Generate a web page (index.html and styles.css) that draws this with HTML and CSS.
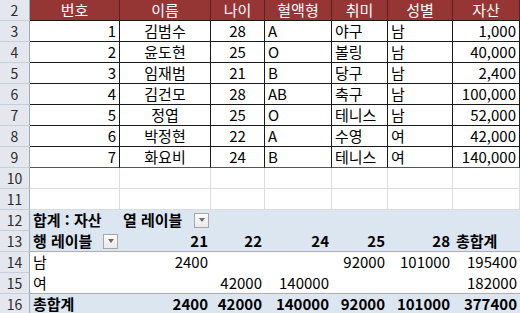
FILE: index.html
```html
<!DOCTYPE html>
<html lang="ko">
<head>
<meta charset="utf-8">
<link rel="stylesheet" href="styles.css">
</head>
<body>
<div class="sheet">
  <div class="row head">
    <div class="rh">2</div>
    <div class="c">번호</div><div class="c">이름</div><div class="c">나이</div><div class="c">혈액형</div><div class="c">취미</div><div class="c">성별</div><div class="c">자산</div>
  </div>
  <div class="row data">
    <div class="rh">3</div>
    <div class="c r">1</div><div class="c m">김범수</div><div class="c m">28</div><div class="c">A</div><div class="c">야구</div><div class="c">남</div><div class="c r">1,000</div>
  </div>
  <div class="row data">
    <div class="rh">4</div>
    <div class="c r">2</div><div class="c m">윤도현</div><div class="c m">25</div><div class="c">O</div><div class="c">볼링</div><div class="c">남</div><div class="c r">40,000</div>
  </div>
  <div class="row data">
    <div class="rh">5</div>
    <div class="c r">3</div><div class="c m">임재범</div><div class="c m">21</div><div class="c">B</div><div class="c">당구</div><div class="c">남</div><div class="c r">2,400</div>
  </div>
  <div class="row data">
    <div class="rh">6</div>
    <div class="c r">4</div><div class="c m">김건모</div><div class="c m">28</div><div class="c">AB</div><div class="c">축구</div><div class="c">남</div><div class="c r">100,000</div>
  </div>
  <div class="row data">
    <div class="rh">7</div>
    <div class="c r">5</div><div class="c m">정엽</div><div class="c m">25</div><div class="c">O</div><div class="c">테니스</div><div class="c">남</div><div class="c r">52,000</div>
  </div>
  <div class="row data">
    <div class="rh">8</div>
    <div class="c r">6</div><div class="c m">박정현</div><div class="c m">22</div><div class="c">A</div><div class="c">수영</div><div class="c">여</div><div class="c r">42,000</div>
  </div>
  <div class="row data last">
    <div class="rh">9</div>
    <div class="c r">7</div><div class="c m">화요비</div><div class="c m">24</div><div class="c">B</div><div class="c">테니스</div><div class="c">여</div><div class="c r">140,000</div>
  </div>
  <div class="row empty">
    <div class="rh">10</div>
    <div class="c"></div><div class="c"></div><div class="c"></div><div class="c"></div><div class="c"></div><div class="c"></div><div class="c"></div>
  </div>
  <div class="row empty">
    <div class="rh">11</div>
    <div class="c"></div><div class="c"></div><div class="c"></div><div class="c"></div><div class="c"></div><div class="c"></div><div class="c"></div>
  </div>
  <div class="row pv band">
    <div class="rh">12</div>
    <div class="c b">합계 : 자산</div>
    <div class="c b drop"><span>열 레이블</span><span class="dd"></span></div>
    <div class="c"></div><div class="c"></div><div class="c"></div><div class="c"></div><div class="c"></div>
  </div>
  <div class="row pv band sep">
    <div class="rh">13</div>
    <div class="c b drop"><span>행 레이블</span><span class="dd"></span></div>
    <div class="c b r">21</div><div class="c b r">22</div><div class="c b r">24</div><div class="c b r">25</div><div class="c b r">28</div><div class="c b">총합계</div>
  </div>
  <div class="row pv">
    <div class="rh">14</div>
    <div class="c">남</div>
    <div class="c r">2400</div><div class="c r"></div><div class="c r"></div><div class="c r">92000</div><div class="c r">101000</div><div class="c r">195400</div>
  </div>
  <div class="row pv sep">
    <div class="rh">15</div>
    <div class="c">여</div>
    <div class="c r"></div><div class="c r">42000</div><div class="c r">140000</div><div class="c r"></div><div class="c r"></div><div class="c r">182000</div>
  </div>
  <div class="row pv band">
    <div class="rh">16</div>
    <div class="c b">총합계</div>
    <div class="c b r">2400</div><div class="c b r">42000</div><div class="c b r">140000</div><div class="c b r">92000</div><div class="c b r">101000</div><div class="c b r">377400</div>
  </div>
</div>
</body>
</html>
```
FILE: styles.css
```css
* { box-sizing: border-box; }
html, body { margin: 0; padding: 0; background: #fff; }
.sheet {
  width: 520px;
  height: 313px;
  overflow: hidden;
  font-family: "Noto Sans CJK KR", "Noto Sans", sans-serif;
  font-size: 15px;
  color: #000;
}
.row {
  display: grid;
  grid-template-columns: 30px 90px 91px 54px 67px 56px 65px 67px;
  height: 21px;
}
.rh {
  background: #e4e8ee;
  color: #2b2b2b;
  font-size: 14px;
  border-right: 1px solid #9eabb9;
  border-bottom: 1px solid #c6ced8;
  display: flex;
  align-items: center;
  justify-content: center;
  line-height: 20px;
}
.c {
  display: flex;
  align-items: center;
  padding: 0 3px;
  line-height: 20px;
  white-space: nowrap;
  overflow: hidden;
}
.r { justify-content: flex-end; }
.m { justify-content: center; }

.head .c {
  background: #963634;
  color: #fff;
  justify-content: center;
  border-right: 1px solid #5c2220;
  border-bottom: 1px solid #1a1a1a;
}
.data .c {
  border-right: 1px solid #1a1a1a;
  border-bottom: 1px solid #1a1a1a;
}
.data.last .c { border-bottom-color: #555; }
.empty .c {
  border-right: 1px solid #dadcdd;
  border-bottom: 1px solid #dadcdd;
}
.pv .c { border-bottom: 1px solid transparent; overflow: visible; }
.pv.band .c { background: #dce6f1; }
.pv.sep .c { border-bottom-color: #95b3d7; }
.b { font-weight: 700; }
.drop { justify-content: space-between; padding-right: 2px; }
.dd {
  width: 15px;
  height: 15px;
  border: 1px solid #a6a6a6;
  background: linear-gradient(#fdfdfd, #e9e9e9);
  display: flex;
  align-items: center;
  justify-content: center;
}
.dd::after {
  content: "";
  border-left: 3px solid transparent;
  border-right: 3px solid transparent;
  border-top: 4px solid #6a6a6a;
}
```
